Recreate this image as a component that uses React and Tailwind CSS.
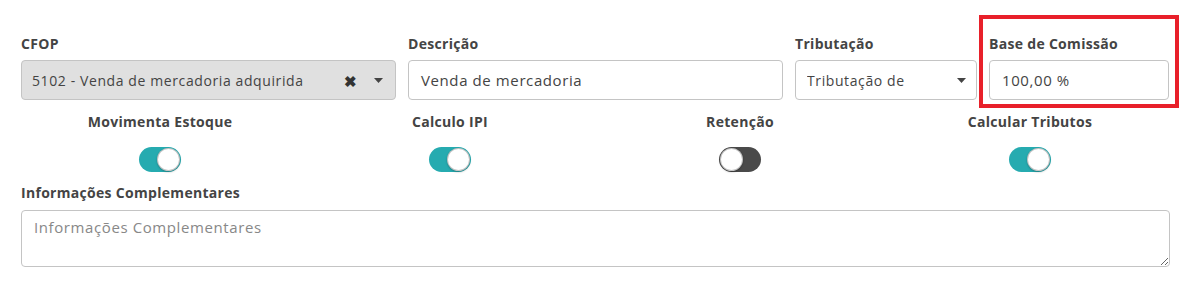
import React from 'react';

const font = { fontFamily: '"Open Sans", Lato, sans-serif' };

function Toggle({ on }) {
    return (
        <div
            className={
                'relative w-[42px] h-[25px] rounded-full ' +
                (on ? 'bg-[#26abb0]' : 'bg-[#4a4a4a]')
            }
        >
            <div
                className={
                    'absolute top-[1px] w-[23px] h-[23px] rounded-full bg-white border border-[#3a3a3a]/30 shadow-[0_1px_2px_rgba(0,0,0,0.25)] ' +
                    (on ? 'right-[1px]' : 'left-[1px]')
                }
            />
        </div>
    );
}

function Caret() {
    return (
        <svg width="9" height="5" viewBox="0 0 9 5" className="fill-[#444]">
            <path d="M0 0 L9 0 L4.5 5 Z" />
        </svg>
    );
}

export default function App() {
    const label = 'block text-[14px] leading-5 font-bold text-[#444] tracking-[0.3px]';
    const toggles = [
        { name: 'Movimenta Estoque', on: true },
        { name: 'Calculo IPI', on: true },
        { name: 'Retenção', on: false },
        { name: 'Calcular Tributos', on: true },
    ];

    return (
        <div className="w-[1186px] h-[284px] bg-white px-[15px] pt-[19px]" style={font}>
            {/* Linha 1 */}
            <div className="grid grid-cols-[387px_387px_194px_192px]">
                <div className="px-[6px] pt-[15px] pb-[4px]">
                    <label className={label + ' mb-[6px]'}>CFOP</label>
                    <div className="h-[40px] flex items-center bg-[#e0e0e0] border border-[#c4c4c4] rounded-[4px] pl-[10px] pr-[12px]">
                        <span className="flex-1 text-[14px] text-[#444] truncate tracking-[0.6px]">5102 - Venda de mercadoria adquirida</span>
                        <span className="text-[15px] font-bold text-[#333] leading-none mr-[17px] mt-[2px]">✖</span>
                        <Caret />
                    </div>
                </div>
                <div className="px-[6px] pt-[15px] pb-[4px]">
                    <label className={label + ' mb-[6px]'}>Descrição</label>
                    <div className="h-[40px] flex items-center border border-[#c4c4c4] rounded-[4px] px-[12px] text-[15px] text-[#444] tracking-[0.6px]">
                        Venda de mercadoria
                    </div>
                </div>
                <div className="px-[6px] pt-[15px] pb-[4px]">
                    <label className={label + ' mb-[6px]'}>Tributação</label>
                    <div className="h-[40px] flex items-center border border-[#c4c4c4] rounded-[4px] pl-[11px] pr-[10px] text-[14px] text-[#444] tracking-[0.6px]">
                        <span className="flex-1 truncate">Tributação de</span>
                        <Caret />
                    </div>
                </div>
                <div className="px-[6px] pt-[15px] pb-[4px] outline-4 outline-[#e8202a]">
                    <label className={label + ' mb-[6px]'}>Base de Comissão</label>
                    <div className="h-[40px] flex items-center border border-[#c4c4c4] rounded-[4px] px-[12px] text-[15px] text-[#444] tracking-[0.6px]">
                        100,00 %
                    </div>
                </div>
            </div>

            {/* Linha 2 - toggles */}
            <div className="grid grid-cols-[290px_290px_290px_290px] mt-[8px]">
                {toggles.map((t) => (
                    <div key={t.name} className="flex flex-col items-center">
                        <span className="text-[14px] leading-5 font-bold text-[#444] tracking-[0.3px]">{t.name}</span>
                        <div className="mt-[15px]">
                            <Toggle on={t.on} />
                        </div>
                    </div>
                ))}
            </div>

            {/* Linha 3 */}
            <div className="pl-[6px] pr-[1px] mt-[11px]">
                <label className={label + ' mb-[7px]'}>Informações Complementares</label>
                <textarea
                    placeholder="Informações Complementares"
                    className="block w-full h-[57px] border border-[#c4c4c4] rounded-[4px] px-[12px] py-[5px] text-[15px] text-[#444] placeholder:text-[#888] outline-none tracking-[0.6px]"
                    style={font}
                />
            </div>
        </div>
    );
}
